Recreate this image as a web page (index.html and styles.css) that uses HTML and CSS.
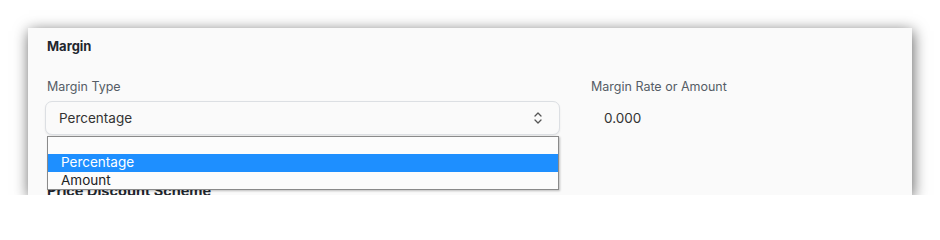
FILE: index.html
```html
<!DOCTYPE html>
<html>
<head>
<meta charset="utf-8">
<link rel="stylesheet" href="styles.css">
</head>
<body>
<div class="card">
  <h3 class="section-title">Margin</h3>
  <div class="form-row">
    <div class="field field-type">
      <label class="field-label">Margin Type</label>
      <div class="select">
        <span class="select-value">Percentage</span>
        <svg class="select-arrow" width="10" height="14" viewBox="0 0 10 14">
          <path d="M2 5 L5 2 L8 5" fill="none" stroke="#555" stroke-width="1.3" stroke-linecap="round" stroke-linejoin="round"/>
          <path d="M2 9 L5 12 L8 9" fill="none" stroke="#555" stroke-width="1.3" stroke-linecap="round" stroke-linejoin="round"/>
        </svg>
      </div>
      <ul class="dropdown">
        <li class="option empty"></li>
        <li class="option selected">Percentage</li>
        <li class="option">Amount</li>
      </ul>
    </div>
    <div class="field">
      <label class="field-label">Margin Rate or Amount</label>
      <div class="value">0.000</div>
    </div>
  </div>
  <h3 class="section-title next">Price Discount Scheme</h3>
</div>
</body>
</html>
```
FILE: styles.css
```css
* { box-sizing: border-box; }
html, body { margin: 0; padding: 0; background: #ffffff; }
body {
  font-family: Inter, "Noto Sans", sans-serif;
  color: #333;
  padding: 28px 0 0 28px;
}
.card {
  width: 884px;
  height: 167px;
  background: #fafafa;
  box-shadow: 1px 3px 14px rgba(0,0,0,0.62);
  padding: 10px 19px 0 19px;
  overflow: hidden;
}
.section-title {
  margin: 0;
  font-size: 13px;
  font-weight: 700;
  color: #1f272e;
  line-height: 16px;
}
.form-row {
  display: grid;
  grid-template-columns: 513px 1fr;
  column-gap: 31px;
  margin-top: 25px;
}
.field { position: relative; }
.field-label {
  display: block;
  font-size: 12.5px;
  color: #555d66;
  line-height: 16px;
  height: 22px;
}
.select {
  height: 34px;
  margin-left: -2px;
  border: 1px solid #dcdfe3;
  border-radius: 7px;
  background: #fafafa;
  box-shadow: 0 1px 2px rgba(0,0,0,0.08);
  display: flex;
  align-items: center;
  justify-content: space-between;
  padding: 0 16px 0 13px;
}
.select-value { font-size: 13.5px; color: #333; }
.select-arrow { display: block; }
.dropdown {
  position: absolute;
  left: 0;
  top: 57px;
  width: 512px;
  margin: 0;
  padding: 0;
  list-style: none;
  background: #fcfcfc;
  border: 1px solid #8a8a8a;
  box-shadow: 1px 1px 2px rgba(0,0,0,0.25);
  z-index: 2;
}
.option {
  height: 17.5px;
  line-height: 17px;
  padding-left: 13px;
  font-size: 13.5px;
  color: #222;
}
.option.empty { height: 17px; }
.option.selected { background: #1e8fff; color: #fff; }
.value {
  font-size: 13.5px;
  color: #333;
  padding: 9px 0 0 13px;
}
.next { margin-top: 48px; font-size: 14.5px; color: #1f272e; }
```
